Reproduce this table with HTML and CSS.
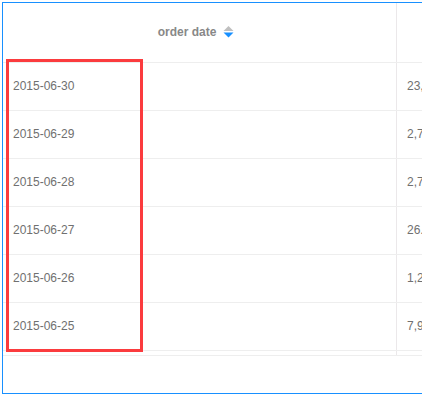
FILE: index.html
```html
<!DOCTYPE html>
<html>
<head>
<meta charset="utf-8">
<link rel="stylesheet" href="styles.css">
</head>
<body>
<div class="frame">
  <div class="table">
    <div class="row head">
      <div class="cell c1 th">
        <span class="th-label">order date</span>
        <svg class="sorter" width="11" height="12" viewBox="0 0 11 12">
          <polygon points="0.5,5 5.5,0 10.5,5" fill="#bfbfbf"/>
          <polygon points="0.5,6.5 5.5,11.5 10.5,6.5" fill="#1890ff"/>
        </svg>
      </div>
      <div class="cell c2 th"></div>
    </div>
    <div class="row"><div class="cell c1">2015-06-30</div><div class="cell c2">23,415.20</div></div>
    <div class="row"><div class="cell c1">2015-06-29</div><div class="cell c2">2,745.60</div></div>
    <div class="row"><div class="cell c1">2015-06-28</div><div class="cell c2">2,718.30</div></div>
    <div class="row"><div class="cell c1">2015-06-27</div><div class="cell c2">26.50</div></div>
    <div class="row"><div class="cell c1">2015-06-26</div><div class="cell c2">1,284.00</div></div>
    <div class="row"><div class="cell c1">2015-06-25</div><div class="cell c2">7,912.40</div></div>
    <div class="row tail"><div class="cell c1"></div><div class="cell c2"></div></div>
  </div>
  <div class="mark"></div>
</div>
</body>
</html>
```
FILE: styles.css
```css
html, body {
  margin: 0;
  padding: 0;
  background: #ffffff;
  overflow: hidden;
}

body {
  font-family: "Liberation Sans", Arial, sans-serif;
  font-size: 12px;
  color: #707070;
}

.frame {
  position: relative;
  box-sizing: border-box;
  margin: 2px 0 0 2px;
  width: 640px;
  height: 392px;
  border: 1px solid #1890ff;
  border-right: none;
}

.table {
  display: flex;
  flex-direction: column;
}

.row {
  display: grid;
  grid-template-columns: 394px 1fr;
  height: 48px;
  box-sizing: border-box;
  border-bottom: 1px solid #eeeeee;
}

.row.head {
  height: 60px;
}

.row.tail {
  height: 5px;
}

.cell {
  display: flex;
  align-items: center;
  padding: 0 10px 2px;
  box-sizing: border-box;
  white-space: nowrap;
  overflow: hidden;
}

.row.tail .cell {
  padding: 0;
}

.c1 {
  border-right: 1px solid #ebe8ea;
}

.th {
  justify-content: center;
  font-weight: bold;
  color: #888888;
  padding-right: 17px;
}

.th-label {
  margin-right: 7px;
}

.sorter {
  display: block;
  margin-top: 1px;
}

.mark {
  position: absolute;
  left: 3px;
  top: 56px;
  width: 137px;
  height: 293px;
  box-sizing: border-box;
  border: 3px solid #fb3b3e;
}
```
